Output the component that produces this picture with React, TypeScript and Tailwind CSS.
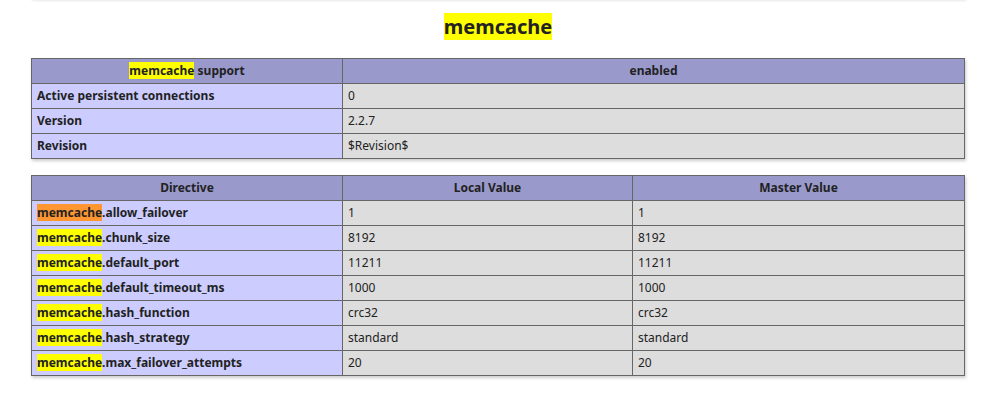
const Hl = ({ children, active }: { children: string; active?: boolean }) => (
  <span className={active ? 'bg-[#ff9632]' : 'bg-[#ffff00]'}>{children}</span>
)

const directives = [
  ['allow_failover', '1', '1'],
  ['chunk_size', '8192', '8192'],
  ['default_port', '11211', '11211'],
  ['default_timeout_ms', '1000', '1000'],
  ['hash_function', 'crc32', 'crc32'],
  ['hash_strategy', 'standard', 'standard'],
  ['max_failover_attempts', '20', '20'],
]

const th = 'border border-[#666] bg-[#99c] px-[5px] py-1 text-center font-bold'
const e = 'border border-[#666] bg-[#ccf] px-[5px] py-1 text-left font-bold'
const v = 'border border-[#666] bg-[#ddd] px-[5px] py-1 text-left'

export default function App() {
  return (
    <div className="min-h-screen bg-white text-[#222]" style={{ fontFamily: '"Noto Sans", "Open Sans", sans-serif' }}>
      <div className="mx-auto w-[934px]">
        <div className="-mt-[4px] h-[2px] w-full shadow-[1px_2px_3px_#ccc]" />
        <h2 className="mt-[16px] mb-[18px] text-center text-[20px] font-bold leading-[26px]">
          <Hl>memcache</Hl>
        </h2>
        <table className="w-full border-collapse text-[12px] leading-[16px] shadow-[1px_2px_3px_#ccc]">
          <tbody>
            <tr>
              <th className={th + ' w-[311px]'}>
                <Hl>memcache</Hl> support
              </th>
              <th className={th}>enabled</th>
            </tr>
            <tr>
              <td className={e}>Active persistent connections</td>
              <td className={v}>0</td>
            </tr>
            <tr>
              <td className={e}>Version</td>
              <td className={v}>2.2.7</td>
            </tr>
            <tr>
              <td className={e}>Revision</td>
              <td className={v}>$Revision$</td>
            </tr>
          </tbody>
        </table>
        <table className="mt-[16px] w-full border-collapse text-[12px] leading-[16px] shadow-[1px_2px_3px_#ccc]">
          <tbody>
            <tr>
              <th className={th + ' w-[311px]'}>Directive</th>
              <th className={th + ' w-[290px]'}>Local Value</th>
              <th className={th}>Master Value</th>
            </tr>
            {directives.map(([name, local, master], i) => (
              <tr key={name}>
                <td className={e}>
                  <Hl active={i === 0}>memcache</Hl>.{name}
                </td>
                <td className={v}>{local}</td>
                <td className={v}>{master}</td>
              </tr>
            ))}
          </tbody>
        </table>
      </div>
    </div>
  )
}
